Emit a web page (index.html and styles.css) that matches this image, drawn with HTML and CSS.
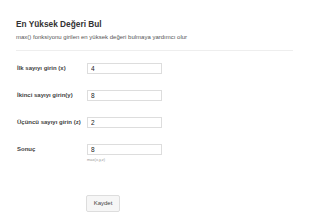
FILE: index.html
```html
<!DOCTYPE html>
<html lang="tr">
<head>
<meta charset="utf-8" />
<title>En Yüksek Değeri Bul</title>
<link rel="stylesheet" href="styles.css">
</head>
<body>
	<div class="page">
		<div class="header">
			<h1 class="title">En Yüksek Değeri Bul</h1>
			<p class="lead">max() fonksiyonu girilen en yüksek değeri bulmaya yardımcı olur</p>
		</div>
		<form class="form">
			<div class="row">
				<label class="label">İlk sayıyı girin (x)</label>
				<div class="field"><input class="input" type="text" value="4"></div>
			</div>
			<div class="row">
				<label class="label">İkinci sayıyı girin(y)</label>
				<div class="field"><input class="input" type="text" value="8"></div>
			</div>
			<div class="row">
				<label class="label">Üçüncü sayıyı girin (z)</label>
				<div class="field"><input class="input" type="text" value="2"></div>
			</div>
			<div class="row">
				<label class="label">Sonuç</label>
				<div class="field">
					<input class="input" type="text" value="8">
					<span class="help">max(x,y,z)</span>
				</div>
			</div>
			<div class="actions">
				<button type="button" class="button">Kaydet</button>
			</div>
		</form>
	</div>
</body>
</html>
```

FILE: styles.css
```css
html, body {
	margin: 0;
	padding: 0;
	background: #FFFFFF;
	font-family: "Liberation Sans", Arial, sans-serif;
	color: #333333;
}

.page {
	padding: 19px 17px 0 16px;
}

.header {
	border-bottom: 1px solid #EEEEEE;
	padding-bottom: 9px;
}

.title {
	margin: 0;
	font-size: 8.3px;
	line-height: 10px;
	font-weight: bold;
	color: #333333;
}

.lead {
	margin: 4px 0 0;
	font-size: 6px;
	line-height: 8px;
	color: #555555;
}

.form {
	padding-top: 12px;
	padding-left: 1px;
}

.row {
	display: flex;
	align-items: flex-start;
	margin-bottom: 16px;
}

.label {
	width: 70px;
	font-size: 6px;
	line-height: 11px;
	font-weight: bold;
	color: #444444;
}

.field {
	display: flex;
	flex-direction: column;
}

.input {
	box-sizing: border-box;
	width: 75px;
	height: 11px;
	margin: 0;
	padding: 0 3px;
	border: 1px solid #DDDDDD;
	font-family: "Liberation Sans", Arial, sans-serif;
	font-size: 6.5px;
	color: #222222;
	outline: none;
}

.help {
	margin-top: 2px;
	font-size: 4px;
	line-height: 5px;
	color: #999999;
}

.actions {
	padding-left: 69px;
	padding-top: 13px;
}

.button {
	width: 34px;
	height: 17px;
	padding: 0;
	background: #F6F6F6;
	border: 1px solid #DDDDDD;
	border-radius: 2px;
	font-family: "Liberation Sans", Arial, sans-serif;
	font-size: 6px;
	color: #444444;
}
```
